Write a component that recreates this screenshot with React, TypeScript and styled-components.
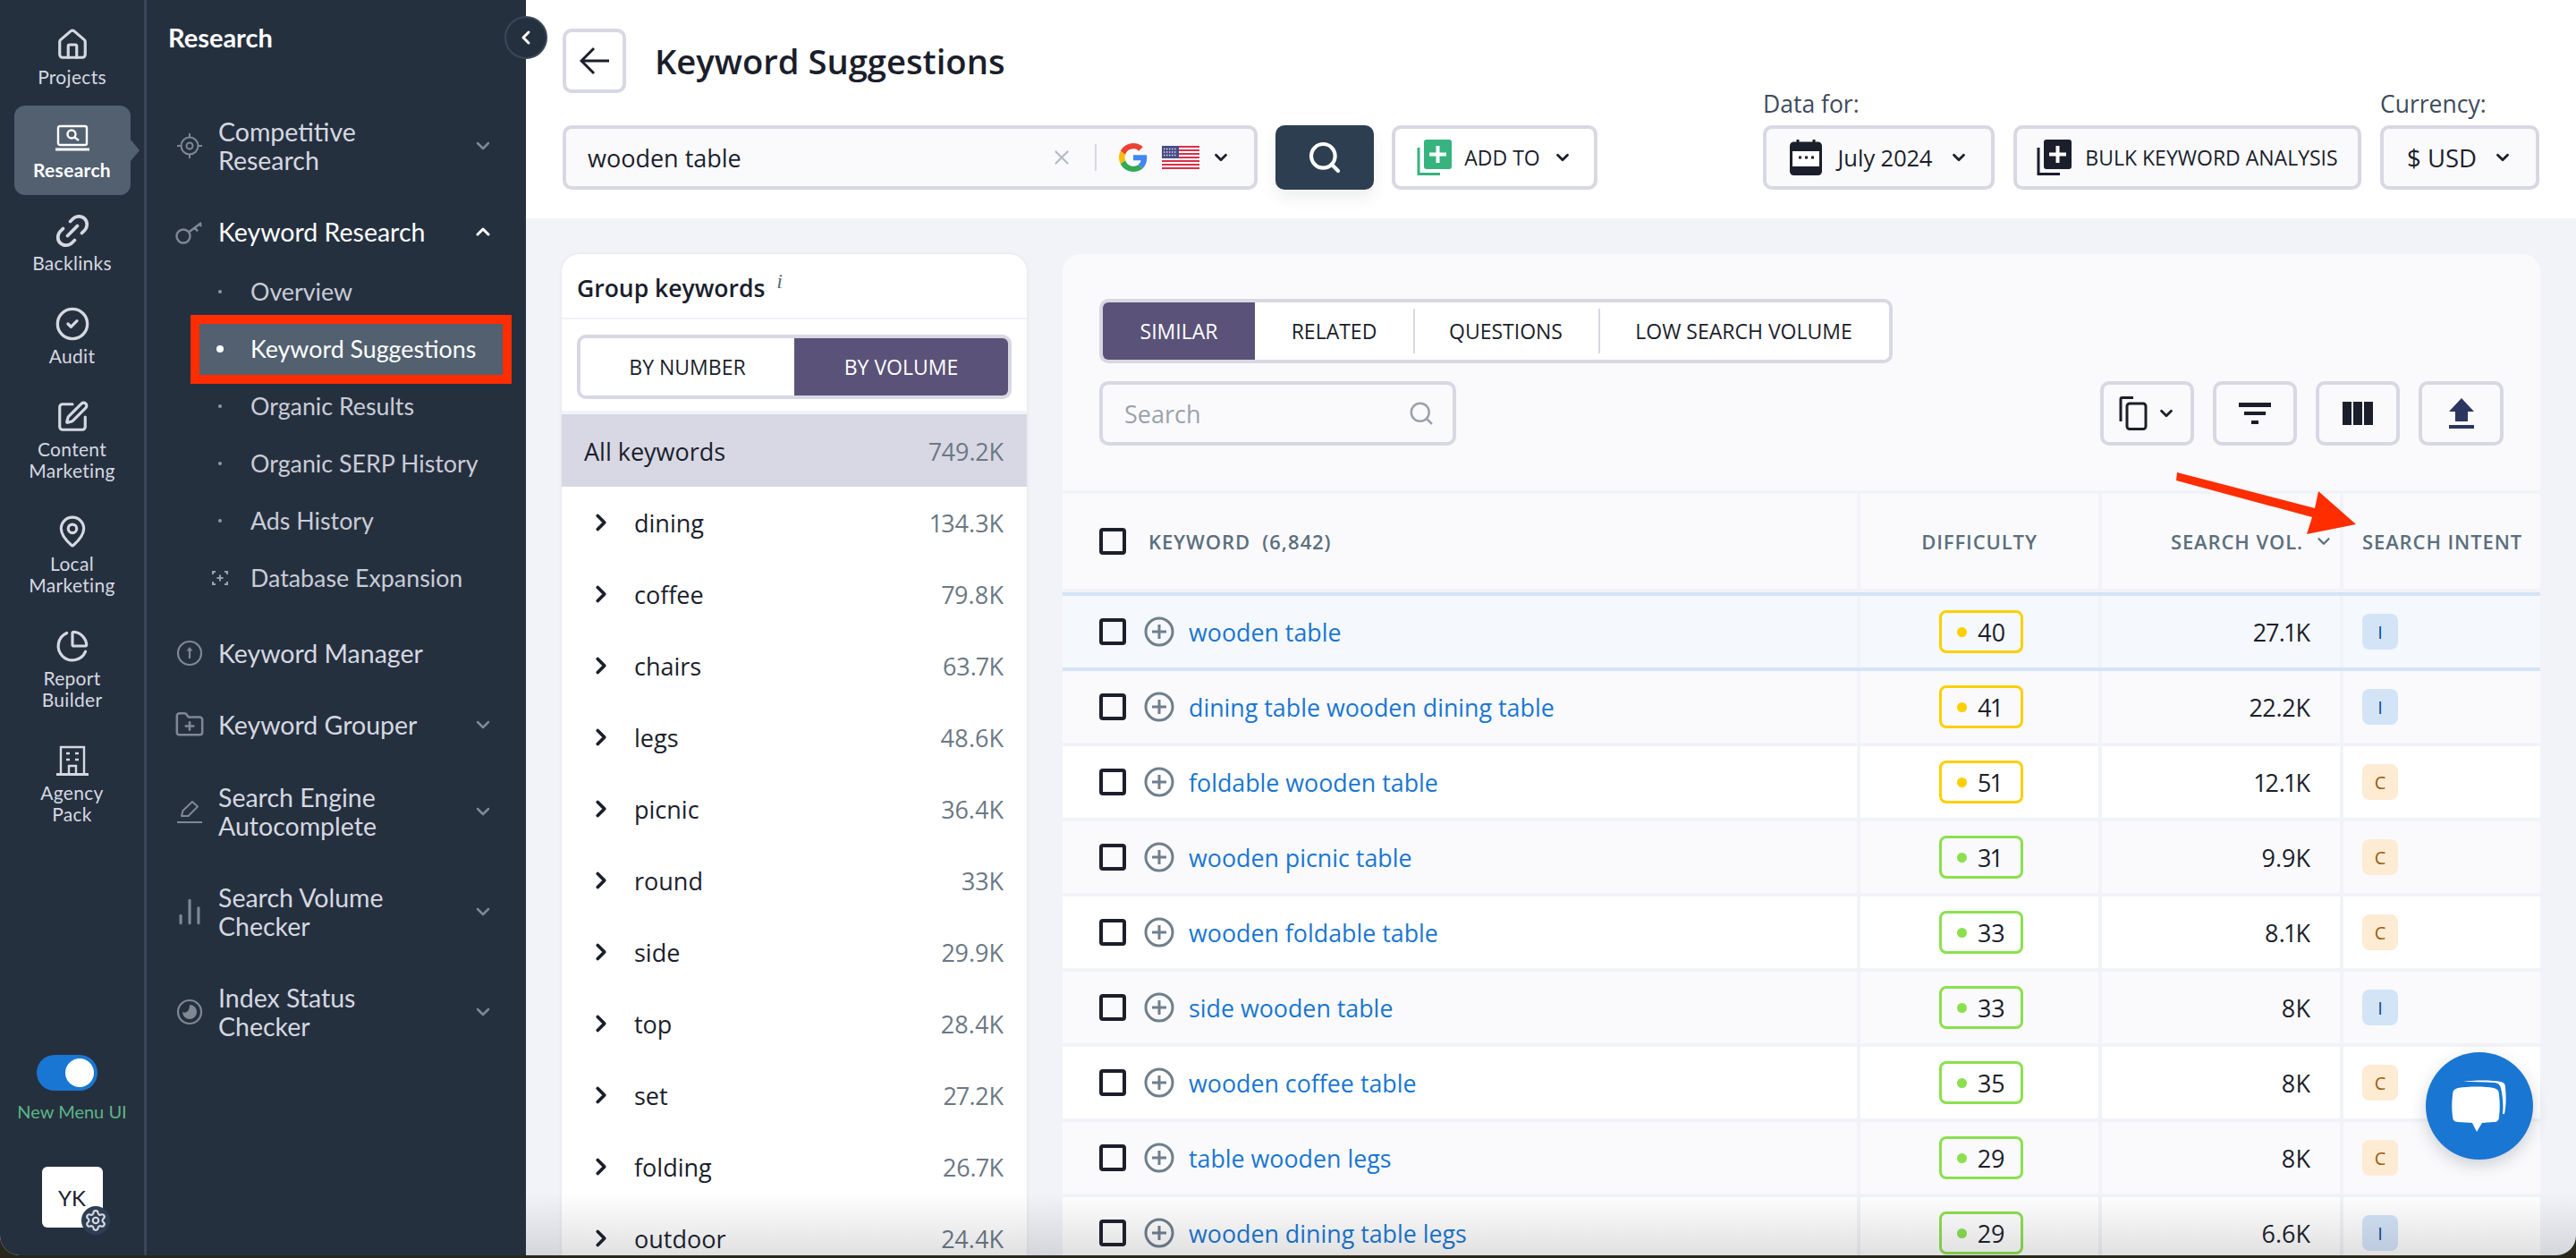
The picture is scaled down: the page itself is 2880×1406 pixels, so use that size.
import { ReactNode } from "react"
import { createGlobalStyle, styled } from "styled-components"
import {
	ChartNoAxesColumn,
	ChartPie,
	ChevronDown,
	ChevronLeft,
	ChevronRight,
	ChevronUp,
	CircleCheck,
	FolderPlus,
	House,
	Link2,
	MapPin,
	Search,
	Settings,
	SquarePen,
	X,
} from "lucide-react"

const GlobalStyle = createGlobalStyle`
	html, body {
		margin: 0;
		width: 2880px;
		height: 1406px;
		overflow: hidden;
		background: #29261a;
		font-family: "Open Sans", sans-serif;
		font-variant-numeric: proportional-nums;
	}
	* { box-sizing: border-box; }
`

const railItems = [
	{ label: ["Projects"], icon: <House size={38} strokeWidth={2} /> },
	{ label: ["Research"], icon: <LaptopIcon />, active: true },
	{ label: ["Backlinks"], icon: <Link2 size={44} strokeWidth={2} style={{ transform: "rotate(-45deg) scaleX(1.05)" }} /> },
	{ label: ["Audit"], icon: <CircleCheck size={40} strokeWidth={2} /> },
	{ label: ["Content", "Marketing"], icon: <SquarePen size={38} strokeWidth={2} /> },
	{ label: ["Local", "Marketing"], icon: <MapPin size={38} strokeWidth={2} /> },
	{ label: ["Report", "Builder"], icon: <ChartPie size={38} strokeWidth={2} /> },
	{ label: ["Agency", "Pack"], icon: <AgencyIcon /> },
]

const groups = [
	["dining", "134.3K"],
	["coffee", "79.8K"],
	["chairs", "63.7K"],
	["legs", "48.6K"],
	["picnic", "36.4K"],
	["round", "33K"],
	["side", "29.9K"],
	["top", "28.4K"],
	["set", "27.2K"],
	["folding", "26.7K"],
	["outdoor", "24.4K"],
]

const keywords = [
	{ name: "wooden table", difficulty: 40, volume: "27.1K", intent: "I" },
	{ name: "dining table wooden dining table", difficulty: 41, volume: "22.2K", intent: "I" },
	{ name: "foldable wooden table", difficulty: 51, volume: "12.1K", intent: "C" },
	{ name: "wooden picnic table", difficulty: 31, volume: "9.9K", intent: "C" },
	{ name: "wooden foldable table", difficulty: 33, volume: "8.1K", intent: "C" },
	{ name: "side wooden table", difficulty: 33, volume: "8K", intent: "I" },
	{ name: "wooden coffee table", difficulty: 35, volume: "8K", intent: "C" },
	{ name: "table wooden legs", difficulty: 29, volume: "8K", intent: "C" },
	{ name: "wooden dining table legs", difficulty: 29, volume: "6.6K", intent: "I" },
]

function LaptopIcon() {
	return (
		<svg width="38" height="30" viewBox="0 0 38 30" fill="none" stroke="currentColor" strokeWidth="2.4">
			<rect x="3" y="2" width="32" height="21" rx="2" />
			<circle cx="18" cy="11" r="4.5" />
			<path d="M21.5 14.5l4.5 3.5" />
			<path d="M0 28h38" strokeWidth="3" />
		</svg>
	)
}

function AgencyIcon() {
	return (
		<svg width="36" height="34" viewBox="0 0 36 34" fill="none" stroke="currentColor" strokeWidth="2.4">
			<path d="M5 32V2h26v30" />
			<path d="M0 32.5h36" strokeWidth="3" />
			<path d="M11 9h4M21 9h4M11 16h4M21 16h4" />
			<path d="M14 32v-9h8v9" />
		</svg>
	)
}

function TargetIcon() {
	return (
		<svg width="30" height="30" viewBox="0 0 30 30" fill="none" stroke="currentColor" strokeWidth="2">
			<circle cx="15" cy="15" r="9.5" />
			<circle cx="15" cy="15" r="3.5" />
			<path d="M15 1v4M15 25v4M1 15h4M25 15h4" />
		</svg>
	)
}

function KeyIcon() {
	return (
		<svg width="32" height="28" viewBox="0 0 32 28" fill="none" stroke="currentColor" strokeWidth="2.4">
			<circle cx="9" cy="19" r="7.5" />
			<path d="M15 14.5L29 4M22 9.5l3 4M27 5l2 3" />
		</svg>
	)
}

function UploadRoundIcon() {
	return (
		<svg width="30" height="30" viewBox="0 0 30 30" fill="none" stroke="currentColor" strokeWidth="2.2">
			<circle cx="15" cy="15" r="13" />
			<path d="M15 21V12" />
			<path d="M15 8l3.5 4.5h-7z" fill="currentColor" stroke="none" />
		</svg>
	)
}

function PencilLineIcon() {
	return (
		<svg width="30" height="30" viewBox="0 0 30 30" fill="none" stroke="currentColor" strokeWidth="2">
			<path d="M6 20l1.5-6L18 4l6 5.5L13.5 20z" strokeLinejoin="round" />
			<path d="M1 27h28" />
		</svg>
	)
}

function MoonRoundIcon() {
	return (
		<svg width="30" height="30" viewBox="0 0 30 30" fill="none" stroke="currentColor" strokeWidth="2.2">
			<circle cx="15" cy="15" r="13" />
			<path d="M15 7a8 8 0 1 1-8 8c3 2 8 0 8-8z" fill="currentColor" stroke="none" />
		</svg>
	)
}

function ExpandIcon() {
	return (
		<svg width="18" height="16" viewBox="0 0 18 16" fill="none" stroke="currentColor" strokeWidth="2">
			<path d="M4 1H1v3M14 1h3v3M4 15H1v-3M14 15h3v-3M9 4.5v7M5.5 8h7" />
		</svg>
	)
}

function GoogleIcon() {
	return (
		<svg width="32" height="32" viewBox="0 0 48 48">
			<path fill="#EA4335" d="M24 9.5c3.5 0 6.7 1.2 9.2 3.6l6.9-6.9C35.9 2.4 30.4 0 24 0 14.6 0 6.5 5.4 2.6 13.2l8 6.2C12.5 13.6 17.8 9.5 24 9.5z" />
			<path fill="#4285F4" d="M46.9 24.5c0-1.6-.1-3.1-.4-4.5H24v9h12.900c-.6 3-2.2 5.5-4.7 7.200l7.700 6c4.500-4.200 7-10.300 7-17.700z" />
			<path fill="#FBBC05" d="M10.5 28.6c-.5-1.400-.8-3-.8-4.600s.3-3.200.8-4.600l-8-6.200C.9 16.500 0 20.100 0 24s.9 7.500 2.600 10.800l7.900-6.200z" />
			<path fill="#34A853" d="M24 48c6.500 0 11.900-2.100 15.900-5.800l-7.700-6c-2.200 1.400-4.900 2.300-8.200 2.300-6.200 0-11.500-4.200-13.400-9.800l-8 6.200C6.500 42.600 14.600 48 24 48z" />
		</svg>
	)
}

function FlagIcon() {
	const stripes = [0, 2, 4, 6, 8, 10, 12]
	return (
		<svg width="42" height="30" viewBox="0 0 42 26">
			<rect width="42" height="26" fill="#fff" rx="2" />
			{stripes.map(i => <rect key={i} y={i * 2} width="42" height="2" fill="#d8304a" />)}
			<rect width="19" height="14" fill="#4a4d85" />
			<path d="M2 3.5h15M2 7h15M2 10.5h15" stroke="#dcdcec" strokeWidth="1.6" strokeDasharray="1.5 1.5" />
		</svg>
	)
}

function StackPlusIcon({ color }: { color: string }) {
	return (
		<svg width="39" height="40" viewBox="0 0 39 40">
			<path d="M2 9v29.5h24" fill="none" stroke={color} strokeWidth="3" />
			<rect x="8" y="0" width="31" height="33" rx="3" fill={color} />
			<path d="M23.5 7v19M14 16.5h19" stroke="#fff" strokeWidth="4" />
		</svg>
	)
}

function CalendarIcon() {
	return (
		<svg width="36" height="40" viewBox="0 0 36 40">
			<path d="M9 0v6M27 0v6" stroke="#1b1e2b" strokeWidth="3" />
			<rect x="1.5" y="4" width="33" height="34.5" rx="3" fill="#fff" stroke="#1b1e2b" strokeWidth="3" />
			<rect x="1.5" y="4" width="33" height="9" fill="#1b1e2b" />
			<rect x="1.5" y="30" width="33" height="9" rx="2" fill="#1b1e2b" />
			<path d="M10 20h3M17 20h3M24 20h3" stroke="#1b1e2b" strokeWidth="3" />
		</svg>
	)
}

function CopyIcon() {
	return (
		<svg width="32" height="38" viewBox="0 0 32 38" fill="none" stroke="#1b1e2b" strokeWidth="3">
			<rect x="9" y="8" width="21" height="28.5" rx="3" />
			<path d="M2 28V3a1.5 1.5 0 0 1 1.5-1.5H16" />
		</svg>
	)
}

function FilterIcon() {
	return (
		<svg width="36" height="24" viewBox="0 0 36 24" fill="#1b1e2b">
			<rect width="36" height="5" y="0" />
			<rect x="6" width="24" height="4" y="10" />
			<rect x="14" width="8" height="4" y="20" />
		</svg>
	)
}

function ColumnsIcon() {
	return (
		<svg width="34" height="26" viewBox="0 0 34 26" fill="#1b1e2b">
			<rect width="10" height="26" />
			<rect x="12" width="10" height="26" />
			<rect x="24" width="10" height="26" />
		</svg>
	)
}

function ExportIcon() {
	return (
		<svg width="28" height="34" viewBox="0 0 28 34" fill="#2a3560">
			<path d="M14 0l14 15H21v11H7V15H0z" />
			<rect y="30" width="28" height="4" />
		</svg>
	)
}

function PlusCircleIcon() {
	return (
		<svg width="34" height="34" viewBox="0 0 34 34" fill="none" stroke="#6f7f8c" strokeWidth="3">
			<circle cx="17" cy="17" r="15" />
			<path d="M17 9v16M9 17h16" />
		</svg>
	)
}

function ChatIcon() {
	return (
		<svg width="60" height="58" viewBox="0 0 60 58" fill="#fff" overflow="visible">
			<path d="M12 2C24 0 44 0 54 2c4 1 5 3 5 7 1 9 1 19-1 29l-2 0c1-10 0-20-2-29-1-4-4-6-8-6C36 2 24 2 12 2z" />
			<path d="M6 9c12-2 30-2 40 0 4 1 6 3 6 8 1 8 1 16 0 24 0 4-2 6-6 6l-13 1-6 10-5-10-16-1c-4 0-6-3-6-6-1-8-1-16 0-24 0-5 2-7 6-8z" />
		</svg>
	)
}

type SideEntry = { icon: ReactNode, label: string, chevron?: boolean, compact?: boolean }

function SideRow({ icon, label, chevron, compact }: SideEntry) {
	return (
		<SideItem $compact={compact}>
			<SideIcon>{icon}</SideIcon>
			<SideLabel>{label}</SideLabel>
			{chevron && <SideChevron><ChevronDown size={24} strokeWidth={2.5} /></SideChevron>}
		</SideItem>
	)
}

function App() {
	return (
		<Page>
			<GlobalStyle />
			<Rail>
				{railItems.map(item => (
					<RailItem key={item.label[0]} $active={item.active}>
						<RailIcon>{item.icon}</RailIcon>
						{item.label.map(line => <RailText key={line}>{line}</RailText>)}
					</RailItem>
				))}
				<RailFooter>
					<Toggle><ToggleKnob /></Toggle>
					<ToggleLabel>New Menu UI</ToggleLabel>
					<Avatar>
						YK
						<AvatarGear><Settings size={26} strokeWidth={2} /></AvatarGear>
					</Avatar>
				</RailFooter>
			</Rail>

			<Sidebar>
				<SideTitle>Research</SideTitle>
				<CollapseButton><ChevronLeft size={24} strokeWidth={3} /></CollapseButton>
				<SideRow icon={<TargetIcon />} label="Competitive Research" chevron />
				<SideItem>
					<SideIcon><KeyIcon /></SideIcon>
					<SideLabel $open>Keyword Research</SideLabel>
					<SideChevron $open><ChevronUp size={24} strokeWidth={3} /></SideChevron>
				</SideItem>
				<SubList>
					<SubRow><SubMark><SubDot /></SubMark>Overview</SubRow>
					<SubRow $active><SubMark><SubDot $active /></SubMark>Keyword Suggestions</SubRow>
					<SubRow><SubMark><SubDot /></SubMark>Organic Results</SubRow>
					<SubRow><SubMark><SubDot /></SubMark>Organic SERP History</SubRow>
					<SubRow><SubMark><SubDot /></SubMark>Ads History</SubRow>
					<SubRow><SubMark><ExpandIcon /></SubMark>Database Expansion</SubRow>
				</SubList>
				<SideRow icon={<UploadRoundIcon />} label="Keyword Manager" compact />
				<SideRow icon={<FolderPlus size={34} strokeWidth={1.8} />} label="Keyword Grouper" chevron />
				<SideRow icon={<PencilLineIcon />} label="Search Engine Autocomplete" chevron />
				<SideRow icon={<ChartNoAxesColumn size={34} strokeWidth={2.2} />} label="Search Volume Checker" chevron />
				<SideRow icon={<MoonRoundIcon />} label="Index Status Checker" chevron />
			</Sidebar>

			<Main>
				<Header>
					<div>
						<TitleRow>
							<BackButton>
								<svg width="34" height="32" viewBox="0 0 34 32" fill="none" stroke="#1b1e2b" strokeWidth="3">
									<path d="M33 16H3M16 2L2 16l14 14" />
								</svg>
							</BackButton>
							<Title>Keyword Suggestions</Title>
						</TitleRow>
						<ControlRow>
							<SearchBox>
								<SearchValue>wooden table</SearchValue>
								<ClearIcon><X size={26} strokeWidth={2} /></ClearIcon>
								<SearchDivider />
								<GoogleIcon />
								<FlagSlot><FlagIcon /></FlagSlot>
								<SearchChevron><ChevronDown size={22} strokeWidth={3} /></SearchChevron>
							</SearchBox>
							<SearchButton><Search size={40} strokeWidth={2.5} /></SearchButton>
							<OutlineButton $width={230} $gap={14} $bg="#fff">
								<StackPlusIcon color="#36b37e" />
								<ButtonText>ADD TO</ButtonText>
								<TinyChevron><ChevronDown size={22} strokeWidth={3} /></TinyChevron>
							</OutlineButton>
						</ControlRow>
					</div>
					<HeaderRight>
						<div>
							<FieldLabel>Data for:</FieldLabel>
							<OutlineButton $width={259} $gap={18}>
								<CalendarIcon />
								<DateText>July 2024</DateText>
								<TinyChevron><ChevronDown size={22} strokeWidth={3} /></TinyChevron>
							</OutlineButton>
						</div>
						<OutlineButton $width={389} $gap={15}>
							<StackPlusIcon color="#1b1e2b" />
							<ButtonText>BULK KEYWORD ANALYSIS</ButtonText>
						</OutlineButton>
						<div>
							<FieldLabel>Currency:</FieldLabel>
							<OutlineButton $width={178} $gap={18}>
								<CurrencyText>$ USD</CurrencyText>
								<TinyChevron><ChevronDown size={22} strokeWidth={3} /></TinyChevron>
							</OutlineButton>
						</div>
					</HeaderRight>
				</Header>

				<Content>
					<GroupPanel>
						<GroupHead>Group keywords <InfoMark>i</InfoMark></GroupHead>
						<GroupToggleWrap>
							<Segment>
								<SegmentButton>BY NUMBER</SegmentButton>
								<SegmentButton $active>BY VOLUME</SegmentButton>
							</Segment>
						</GroupToggleWrap>
						<AllRow>
							<span>All keywords</span>
							<GroupValue>749.2K</GroupValue>
						</AllRow>
						{groups.map(([name, value]) => (
							<GroupRow key={name}>
								<GroupChevron><ChevronRight size={30} strokeWidth={3} /></GroupChevron>
								<GroupName>{name}</GroupName>
								<GroupValue>{value}</GroupValue>
							</GroupRow>
						))}
					</GroupPanel>

					<TablePanel>
						<PanelTop>
							<Tabs>
								<Tab $active $width={170}>SIMILAR</Tab>
								<Tab $width={177}>RELATED</Tab>
								<Tab $width={207} $divider>QUESTIONS</Tab>
								<Tab $width={325} $divider>LOW SEARCH VOLUME</Tab>
							</Tabs>
							<ToolRow>
								<FilterSearch>
									<span>Search</span>
									<Search size={30} strokeWidth={2} />
								</FilterSearch>
								<Tools>
									<ToolButton $width={105}>
										<CopyIcon />
										<ToolChevron><ChevronDown size={22} strokeWidth={3} /></ToolChevron>
									</ToolButton>
									<ToolButton $width={94}><FilterIcon /></ToolButton>
									<ToolButton $width={94}><ColumnsIcon /></ToolButton>
									<ToolButton $width={95}><ExportIcon /></ToolButton>
								</Tools>
							</ToolRow>
						</PanelTop>

						<Table>
							<HeadRow>
								<KeywordHead>
									<Checkbox />
									<HeadText>KEYWORD&nbsp; (6,842)</HeadText>
								</KeywordHead>
								<DifficultyHead><HeadText>DIFFICULTY</HeadText></DifficultyHead>
								<VolumeHead>
									<HeadText>SEARCH VOL.</HeadText>
									<ChevronDown size={22} strokeWidth={2.5} color="#5b6f7c" />
								</VolumeHead>
								<IntentCell><HeadText>SEARCH INTENT</HeadText></IntentCell>
							</HeadRow>
							{keywords.map((row, i) => (
								<BodyRow key={row.name} $first={i === 0}>
									<KeywordCell $tone={i}>
										<Checkbox />
										<PlusCircleIcon />
										<KeywordLink>{row.name}</KeywordLink>
									</KeywordCell>
									<DifficultyCell $tone={i}>
										<DifficultyBadge $hard={row.difficulty >= 40}>
											<DifficultyDot $hard={row.difficulty >= 40} />
											{row.difficulty}
										</DifficultyBadge>
									</DifficultyCell>
									<VolumeCell $tone={i}>{row.volume}</VolumeCell>
									<IntentCell $tone={i}>
										<IntentBadge $commercial={row.intent === "C"}>{row.intent}</IntentBadge>
									</IntentCell>
								</BodyRow>
							))}
						</Table>
					</TablePanel>
				</Content>
				<BottomFade />
				<ChatBubble><ChatIcon /></ChatBubble>
				<AnnotationArrow width="210" height="76" viewBox="0 0 210 76">
					<path d="M1 0L155 40L159 21L201 58L146 69L152 50L0 9z" fill="#ff2d00" />
				</AnnotationArrow>
			</Main>
		</Page>
	)
}

const Page = styled.div`
	display: flex;
	width: 2880px;
	height: 1403px;
	border-radius: 0 0 22px 22px;
	overflow: hidden;
	background: #f2f3f8;
`

const Rail = styled.nav`
	display: flex;
	flex-direction: column;
	align-items: center;
	gap: 4px;
	width: 164px;
	flex-shrink: 0;
	padding-top: 14px;
	background: #25303f;
	border-right: 3px solid #3a4758;
`

const RailItem = styled.div<{ $active?: boolean }>`
	position: relative;
	display: flex;
	flex-direction: column;
	align-items: center;
	width: 130px;
	padding-top: 14px;
	padding-bottom: 16px;
	border-radius: 12px;
	color: ${props => props.$active ? "#fff" : "#d5d8e0"};
	background: ${props => props.$active ? "#526070" : "transparent"};
	font-weight: ${props => props.$active ? 700 : 400};

	${props => props.$active && `
		&::after {
			content: "";
			position: absolute;
			right: -10px;
			top: 38px;
			border-left: 10px solid #526070;
			border-top: 12px solid transparent;
			border-bottom: 12px solid transparent;
		}
	`}
`

const RailIcon = styled.div`
	display: flex;
	align-items: center;
	justify-content: center;
	height: 44px;
	margin-bottom: 2px;
`

const RailText = styled.div`
	font-family: Lato, sans-serif;
	font-size: 21px;
	line-height: 24px;
	letter-spacing: 0.3px;
`

const RailFooter = styled.div`
	display: flex;
	flex-direction: column;
	align-items: center;
	margin-top: auto;
	padding-bottom: 31px;
`

const Toggle = styled.div`
	display: flex;
	align-items: center;
	justify-content: flex-end;
	width: 68px;
	height: 40px;
	margin-left: -12px;
	padding-right: 4px;
	border-radius: 20px;
	background: #1976d2;
`

const ToggleKnob = styled.div`
	width: 32px;
	height: 32px;
	border-radius: 50%;
	background: #fff;
`

const ToggleLabel = styled.div`
	margin-top: 11px;
	margin-bottom: 50px;
	font-family: Lato, sans-serif;
	font-size: 20px;
	line-height: 24px;
	color: #5cb585;
	white-space: nowrap;
`

const Avatar = styled.div`
	position: relative;
	display: flex;
	align-items: center;
	justify-content: center;
	width: 68px;
	height: 68px;
	border-radius: 6px;
	background: #fff;
	font-family: Lato, sans-serif;
	font-size: 24px;
	color: #1b1e2b;
`

const AvatarGear = styled.div`
	position: absolute;
	right: -8px;
	bottom: -8px;
	display: flex;
	align-items: center;
	justify-content: center;
	width: 32px;
	height: 32px;
	border-radius: 50%;
	background: #2e3e54;
	color: #d5d8e0;
`

const Sidebar = styled.aside`
	position: relative;
	display: flex;
	flex-direction: column;
	width: 424px;
	flex-shrink: 0;
	background: #25303f;
	font-family: Lato, sans-serif;
`

const SideTitle = styled.div`
	height: 107px;
	padding: 24px 0 0 24px;
	font-size: 29px;
	line-height: 36px;
	font-weight: 700;
	color: #fff;
`

const CollapseButton = styled.div`
	position: absolute;
	top: 18px;
	right: -24px;
	z-index: 2;
	display: flex;
	align-items: center;
	justify-content: center;
	width: 48px;
	height: 48px;
	border-radius: 50%;
	background: #25303f;
	border: 2px solid #3a4758;
	color: #fff;
`

const SideItem = styled.div<{ $compact?: boolean }>`
	display: flex;
	align-items: center;
	padding: ${props => props.$compact ? "23px" : "24px"} 36px ${props => props.$compact ? "23px" : "24px"} 29px;
`

const SideIcon = styled.div`
	display: flex;
	align-items: center;
	justify-content: center;
	width: 38px;
	margin-right: 13px;
	color: #7f8893;
`

const SideLabel = styled.div<{ $open?: boolean }>`
	flex: 1;
	max-width: 236px;
	font-size: 28.5px;
	line-height: 32px;
	color: ${props => props.$open ? "#fff" : "#d5d8e0"};
	white-space: normal;
`

const SideChevron = styled.div<{ $open?: boolean }>`
	display: flex;
	margin-left: auto;
	color: ${props => props.$open ? "#fff" : "#7f8893"};
`

const SubList = styled.div`
	display: flex;
	flex-direction: column;
	margin: -5px 26px 13px 59px;
`

const SubRow = styled.div<{ $active?: boolean }>`
	display: flex;
	align-items: center;
	height: ${props => props.$active ? "57px" : "64px"};
	margin-block: ${props => props.$active ? "3.5px" : "0"};
	font-size: 26.8px;
	color: ${props => props.$active ? "#fff" : "#c9ccd6"};
	background: ${props => props.$active ? "#526070" : "transparent"};
	outline: ${props => props.$active ? "10px solid #ff2d00" : "none"};
`

const SubMark = styled.div`
	display: flex;
	justify-content: center;
	width: 46px;
	margin-right: 11px;
	color: #9aa2ac;
`

const SubDot = styled.div<{ $active?: boolean }>`
	width: ${props => props.$active ? "8px" : "4px"};
	height: ${props => props.$active ? "8px" : "4px"};
	border-radius: 50%;
	background: ${props => props.$active ? "#fff" : "#8f98a3"};
`

const Main = styled.main`
	position: relative;
	display: flex;
	flex-direction: column;
	flex: 1;
	min-width: 0;
`

const Header = styled.header`
	display: flex;
	justify-content: space-between;
	align-items: flex-end;
	height: 244px;
	flex-shrink: 0;
	padding: 32px 41px;
	background: #fff;
`

const TitleRow = styled.div`
	display: flex;
	align-items: center;
	gap: 32px;
	margin-bottom: 36px;
`

const BackButton = styled.div`
	display: flex;
	align-items: center;
	justify-content: center;
	width: 71px;
	height: 72px;
	border: 4px solid #d8d8e4;
	border-radius: 10px;
	background: #fff;
`

const Title = styled.h1`
	margin: 0;
	font-size: 38.2px;
	font-weight: 600;
	color: #1b1e2b;
`

const ControlRow = styled.div`
	display: flex;
	gap: 20px;
`

const SearchBox = styled.div`
	display: flex;
	align-items: center;
	width: 777px;
	height: 72px;
	padding: 0 26px 0 24px;
	border: 4px solid #d8d8e4;
	border-radius: 10px;
	background: #fafafc;
`

const SearchValue = styled.div`
	flex: 1;
	font-size: 27px;
	color: #1b1e2b;
`

const ClearIcon = styled.div`
	display: flex;
	color: #b4b8c8;
	margin-right: 24px;
`

const SearchDivider = styled.div`
	width: 2px;
	height: 30px;
	margin-right: 25px;
	background: #d8d8e4;
`

const FlagSlot = styled.div`
	display: flex;
	margin-left: 16px;
`

const TinyChevron = styled.div`
	display: flex;
	color: #1b1e2b;
`

const SearchChevron = styled(TinyChevron)`
	margin-left: 13px;
`

const ToolChevron = styled(TinyChevron)`
	margin-left: 10px;
`

const SearchButton = styled.div`
	display: flex;
	align-items: center;
	justify-content: center;
	width: 110px;
	height: 72px;
	border-radius: 10px;
	background: #2d3e50;
	color: #fff;
	box-shadow: 0 10px 16px rgba(45, 62, 80, 0.08);
`

const OutlineButton = styled.div<{ $width: number, $gap: number, $bg?: string }>`
	display: flex;
	align-items: center;
	justify-content: center;
	gap: ${props => props.$gap}px;
	width: ${props => props.$width}px;
	height: 72px;
	border: 4px solid #d8d8e4;
	border-radius: 10px;
	background: ${props => props.$bg ?? "#fafafc"};
`

const ButtonText = styled.span`
	font-size: 23px;
	font-weight: 500;
	color: #1b1e2b;
	white-space: nowrap;
`

const DateText = styled.span`
	font-size: 25.5px;
	color: #1b1e2b;
	white-space: nowrap;
`

const CurrencyText = styled(DateText)`
	font-size: 27.5px;
`

const HeaderRight = styled.div`
	display: flex;
	align-items: flex-end;
	gap: 21px;
`

const FieldLabel = styled.div`
	margin-bottom: 6px;
	font-size: 26.5px;
	line-height: 36px;
	color: #3d4b5c;
`

const Content = styled.div`
	display: flex;
	gap: 40px;
	flex: 1;
	min-height: 0;
	padding: 40px 40px 0;
	overflow: hidden;
`

const GroupPanel = styled.section`
	width: 520px;
	flex-shrink: 0;
	border-radius: 20px 20px 0 0;
	background: #fff;
	box-shadow: 0 0 4px rgba(30, 40, 70, 0.08);
`

const GroupHead = styled.div`
	height: 73px;
	padding: 20px 17px 0;
	border-bottom: 2px solid #f0f0f5;
	font-size: 26.5px;
	line-height: 36px;
	font-weight: 600;
	color: #1b1e2b;
`

const InfoMark = styled.sup`
	margin-left: 6px;
	font-family: "Liberation Serif", serif;
	font-size: 24px;
	font-style: italic;
	font-weight: 400;
	line-height: 0;
	color: #5b6f7c;
`

const GroupToggleWrap = styled.div`
	height: 106px;
	padding: 17px 17px;
	border-bottom: 4px solid #f2f3f8;
`

const Segment = styled.div`
	display: flex;
	height: 72px;
	border: 4px solid #d8d8e4;
	border-radius: 10px;
	overflow: hidden;
`

const SegmentButton = styled.div<{ $active?: boolean }>`
	display: flex;
	flex: 1;
	align-items: center;
	justify-content: center;
	font-size: 23px;
	font-weight: 500;
	color: ${props => props.$active ? "#fff" : "#1b1e2b"};
	background: ${props => props.$active ? "#5a5278" : "#fff"};
`

const AllRow = styled.div`
	display: flex;
	align-items: center;
	justify-content: space-between;
	height: 81px;
	padding: 2px 26px 0 25px;
	background: #d8d8e4;
	font-size: 27px;
	color: #1b1e2b;
`

const GroupRow = styled.div`
	display: flex;
	align-items: center;
	height: 80px;
	padding: 0 26px 0 29px;
	font-size: 27px;
	color: #1b1e2b;
`

const GroupChevron = styled.div`
	display: flex;
	width: 52px;
	color: #1b1e2b;
`

const GroupName = styled.span`
	flex: 1;
`

const GroupValue = styled.span`
	font-size: 27px;
	color: #6b7885;
`

const TablePanel = styled.section`
	flex: 1;
	min-width: 0;
	border-radius: 20px 20px 0 0;
	background: #fafafc;
	overflow: hidden;
`

const PanelTop = styled.div`
	display: flex;
	flex-direction: column;
	gap: 20px;
	height: 264px;
	padding: 50px 41px;
`

const Tabs = styled.div`
	display: flex;
	align-self: flex-start;
	height: 72px;
	border: 4px solid #d8d8e4;
	border-radius: 10px;
	overflow: hidden;
	background: #fff;
`

const Tab = styled.div<{ $active?: boolean, $width: number, $divider?: boolean }>`
	position: relative;
	display: flex;
	align-items: center;
	justify-content: center;
	width: ${props => props.$width}px;
	font-size: 23px;
	font-weight: 500;
	color: ${props => props.$active ? "#fff" : "#1b1e2b"};
	background: ${props => props.$active ? "#5a5278" : "#fff"};

	${props => props.$divider && `
		&::before {
			content: "";
			position: absolute;
			left: 0;
			top: 7px;
			bottom: 7px;
			width: 2px;
			background: #d8d8e4;
		}
	`}
`

const ToolRow = styled.div`
	display: flex;
	justify-content: space-between;
`

const FilterSearch = styled.div`
	display: flex;
	align-items: center;
	justify-content: space-between;
	width: 399px;
	height: 72px;
	padding: 0 20px 0 24px;
	border: 4px solid #d8d8e4;
	border-radius: 10px;
	font-size: 27px;
	color: #9aa2ac;
`

const Tools = styled.div`
	display: flex;
	gap: 21px;
`

const ToolButton = styled.div<{ $width: number }>`
	display: flex;
	align-items: center;
	justify-content: center;
	width: ${props => props.$width}px;
	height: 72px;
	border: 4px solid #d8d8e4;
	border-radius: 10px;
	background: #fafafc;
`

const Table = styled.div`
	display: flex;
	flex-direction: column;
	gap: 4px;
	padding-top: 4px;
	background: #f2f3f8;
`

const rowColumns = "888px 266px 266px 1fr"

const HeadRow = styled.div`
	display: grid;
	grid-template-columns: ${rowColumns};
	gap: 4px;
	height: 106px;
`

const BodyRow = styled.div<{ $first?: boolean }>`
	display: grid;
	grid-template-columns: ${rowColumns};
	gap: 4px;
	flex-shrink: 0;
	height: 80px;
	margin-top: ${props => props.$first ? "4px" : "0"};
	box-shadow: ${props => props.$first ? "0 -4px 0 #d3e4f7, 0 4px 0 #d3e4f7" : "none"};
`

const toneColor = (tone?: number) => {
	if (tone === undefined) return "#fafafc"
	if (tone === 0) return "#f5f8fc"
	return tone % 2 === 1 ? "#fafafc" : "#fff"
}

const Cell = styled.div<{ $tone?: number }>`
	display: flex;
	align-items: center;
	background: ${props => toneColor(props.$tone)};
`

const KeywordHead = styled(Cell)`
	gap: 25px;
	padding-left: 41px;
`

const DifficultyHead = styled(Cell)`
	justify-content: center;
`

const VolumeHead = styled(Cell)`
	justify-content: flex-end;
	gap: 12px;
	padding-right: 7px;
`

const IntentCell = styled(Cell)`
	padding-left: 21px;
`

const HeadText = styled.span`
	font-size: 22px;
	font-weight: 600;
	letter-spacing: 0.9px;
	color: #5b6f7c;
	white-space: nowrap;
`

const Checkbox = styled.div`
	width: 30px;
	height: 30px;
	flex-shrink: 0;
	border: 4px solid #1b1e2b;
	border-radius: 4px;
	background: transparent;
`

const KeywordCell = styled(Cell)`
	padding-left: 41px;
	gap: 20px;
`

const KeywordLink = styled.span`
	margin-left: -4px;
	font-size: 26.8px;
	color: #1976d2;
`

const DifficultyCell = styled(Cell)`
	justify-content: center;
`

const DifficultyBadge = styled.div<{ $hard: boolean }>`
	display: flex;
	align-items: center;
	gap: 12px;
	width: 94px;
	height: 48px;
	padding-left: 17px;
	margin-left: 4px;
	border: 3px solid ${props => props.$hard ? "#fccf00" : "#8be04e"};
	border-radius: 8px;
	font-size: 27px;
	color: #1b1e2b;
`

const DifficultyDot = styled.span<{ $hard: boolean }>`
	width: 11px;
	height: 11px;
	border-radius: 50%;
	background: ${props => props.$hard ? "#fccf00" : "#8be04e"};
`

const VolumeCell = styled(Cell)`
	justify-content: flex-end;
	padding-right: 33px;
	font-size: 27px;
	color: #1b1e2b;
`

const IntentBadge = styled.div<{ $commercial: boolean }>`
	display: flex;
	align-items: center;
	justify-content: center;
	width: 40px;
	height: 40px;
	border-radius: 8px;
	font-size: 20px;
	font-weight: 500;
	color: ${props => props.$commercial ? "#985d10" : "#0b4a8f"};
	background: ${props => props.$commercial ? "#fdebd3" : "#d3e4f7"};
`

const BottomFade = styled.div`
	position: absolute;
	left: 0;
	right: 0;
	bottom: 0;
	height: 70px;
	background: linear-gradient(to bottom, rgba(40, 40, 50, 0), rgba(40, 40, 50, 0.14));
	pointer-events: none;
`

const ChatBubble = styled.div`
	position: absolute;
	left: 2124px;
	top: 1176px;
	display: flex;
	align-items: center;
	justify-content: center;
	width: 120px;
	height: 120px;
	border-radius: 50%;
	background: #1976d2;
	box-shadow: 0 6px 18px rgba(30, 40, 60, 0.2);
`

const AnnotationArrow = styled.svg`
	position: absolute;
	left: 1845px;
	top: 528px;
`

export default App
